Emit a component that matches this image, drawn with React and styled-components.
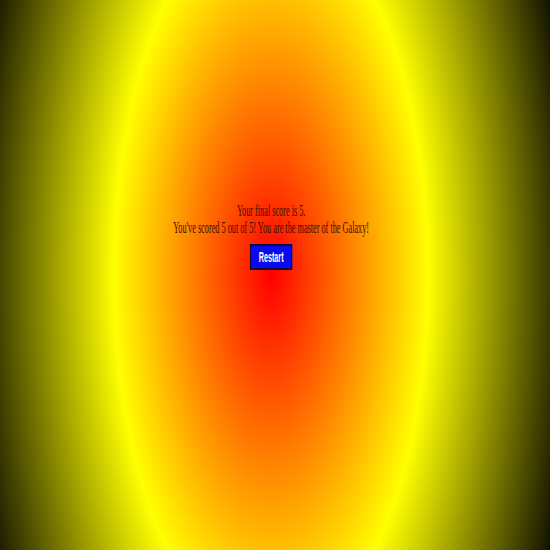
import React from 'react'
import styled, { createGlobalStyle } from 'styled-components'

const GlobalStyle = createGlobalStyle`
    html, body {
        margin: 0;
        padding: 0;
    }
`

const Page = styled.div`
    min-height: 100vh;
    box-sizing: border-box;
    padding: 202px 8px 0 0;
    display: flex;
    flex-direction: column;
    align-items: center;
    background: radial-gradient(ellipse 314px 733px at 271px 275px, #ff0000 0%, #ffff00 50%, #000000 100%);
    background-color: #000;
`

const Content = styled.div`
    display: flex;
    flex-direction: column;
    align-items: center;
    transform: scaleX(0.515);
    font-family: "Liberation Serif", "Times New Roman", serif;
    font-size: 16px;
    line-height: 17px;
    color: #420e00;
    white-space: nowrap;
`

const Line = styled.div`
    text-align: center;
`

const RestartButton = styled.button`
    margin-top: 8px;
    width: 82px;
    height: 26px;
    border: 2px solid #0b0b3a;
    background: #0a0af0;
    color: #ffffff;
    font-family: "Liberation Sans", Arial, sans-serif;
    font-size: 14px;
    font-weight: bold;
    cursor: pointer;
    padding: 0;
`

const App = () => {
    const score = 5
    const total = 5

    return (
        <>
            <GlobalStyle />
            <Page>
                <Content>
                    <Line>Your final score is {score}.</Line>
                    <Line>You've scored {score} out of {total}! You are the master of the Galaxy!</Line>
                    <RestartButton>Restart</RestartButton>
                </Content>
            </Page>
        </>
    )
}

export default App
